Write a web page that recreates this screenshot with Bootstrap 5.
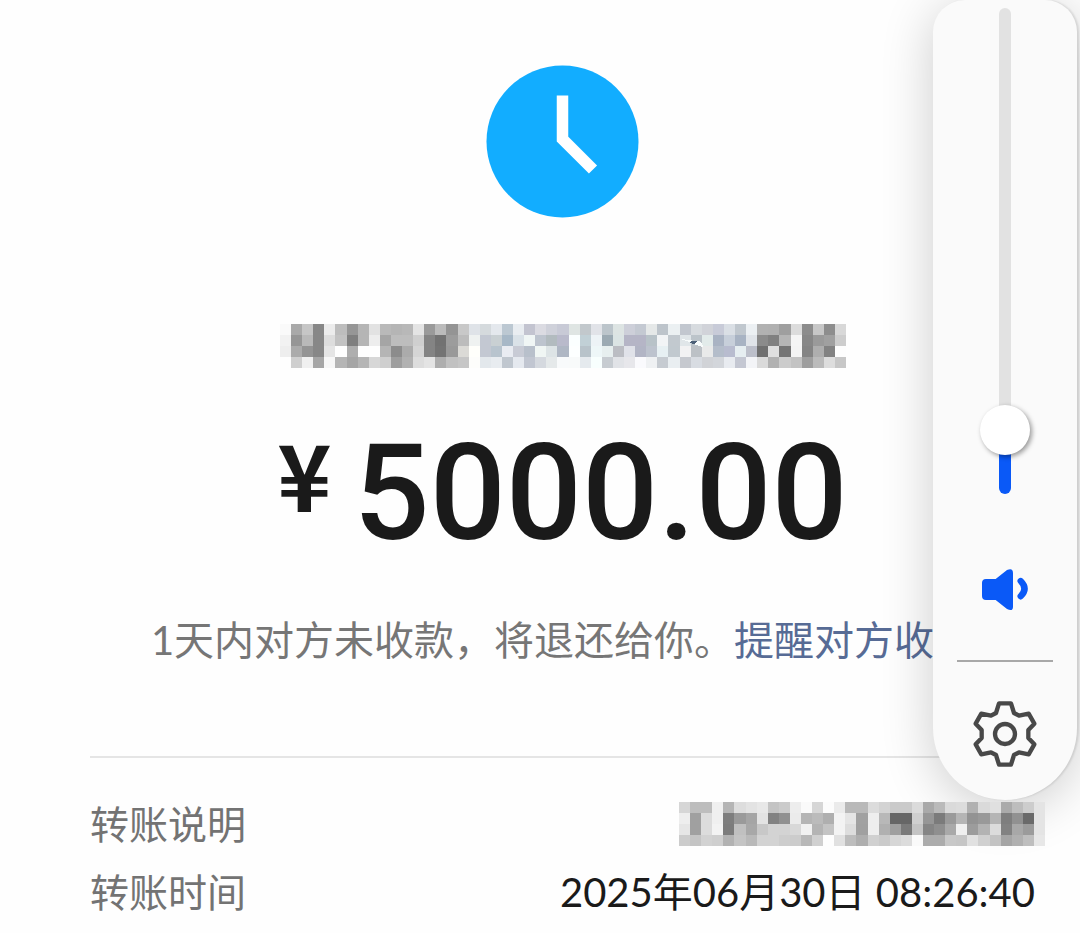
<!DOCTYPE html>
<html lang="zh-CN">
<head>
<meta charset="utf-8">
<meta name="viewport" content="width=device-width, initial-scale=1">
<title>转账</title>
<link href="https://cdn.jsdelivr.net/npm/bootstrap@5.3.0/dist/css/bootstrap.min.css" rel="stylesheet">
<style>
  body { font-family: Lato, "Noto Sans CJK SC", sans-serif; font-size: 40px; line-height: 60px; color: #1a1a1a; background: #fefefe; overflow: hidden; }
  .transfer { padding: 65px 45px 0 90px; }
  .mosaic { display: block; height: 44px; }
  .payee { margin-top: 106px; }
  .amount { margin-top: 58px; gap: 22px; color: #1a1a1a; }
  .yen { font-family: "Noto Sans CJK SC", sans-serif; font-size: 92px; line-height: 92px; font-weight: 700; }
  .figure { font-family: Roboto, sans-serif; font-size: 134px; line-height: 136px; font-weight: 500; }
  .hint { margin-top: 48px; padding-right: 40px; color: #767676; white-space: nowrap; }
  .hint a { color: #576b95; text-decoration: none; }
  .details { margin-top: 86px; border-top: 2px solid #e5e5e5; padding-top: 36px; }
  .details dt { color: #737373; font-weight: 400; font-size: 39px; }
  .details dd { margin: 0; }
  .details .line { min-height: 68px; }
  .details .note { margin-right: -10px; }
  .volume { top: 0; right: 3px; width: 144px; padding: 8px 0 32px; background: #fafafa; border-radius: 32px 32px 72px 72px; box-shadow: 0 8px 52px rgba(0,0,0,.2), 2px 0 2px rgba(0,0,0,.1); }
  .slider-slot { width: 52px; height: 486px; }
  .slider { appearance: none; -webkit-appearance: none; width: 486px; height: 52px; flex: none; margin: 0; background: transparent; transform: rotate(-90deg); }
  .slider::-webkit-slider-runnable-track { height: 12px; border-radius: 6px; background: linear-gradient(to right, #0a59f7 13%, #e2e2e2 13%); }
  .slider::-webkit-slider-thumb { -webkit-appearance: none; width: 50px; height: 50px; margin-top: -19px; border: 0; border-radius: 50%; background: #fff; box-shadow: -2px 2px 5px rgba(0,0,0,.4); }
  .speaker { margin-top: 74px; }
  .volume hr { width: 96px; margin: 48px 0 38px; border-top: 2px solid #a8a8a8; opacity: 1; }
</style>
</head>
<body>
<main class="transfer d-flex flex-column align-items-center">
  <svg width="153" height="153" viewBox="0 0 153 153" role="img" aria-label="待收款">
    <circle cx="76.500" cy="76.500" r="76" fill="#12adff"/>
    <path d="M76.500 30.500V74L107 104.500" fill="none" stroke="#fff" stroke-width="11.500"/>
  </svg>

  <svg class="mosaic payee" width="566" height="44" viewBox="0 0 51 4" preserveAspectRatio="none" shape-rendering="crispEdges" id="payee" aria-hidden="true"></svg>

  <h1 class="amount d-flex align-items-start mb-0">
    <span class="yen">¥</span><span class="figure">5000.00</span>
  </h1>

  <p class="hint mb-0">1天内对方未收款，将退还给你。<a href="#">提醒对方收</a></p>

  <dl class="details w-100 mb-0">
    <div class="line d-flex justify-content-between align-items-start">
      <dt>转账说明</dt>
      <dd class="note position-relative z-3 pt-2"><svg class="mosaic" width="366" height="44" viewBox="0 0 33 4" preserveAspectRatio="none" shape-rendering="crispEdges" id="note" aria-hidden="true"></svg></dd>
    </div>
    <div class="line d-flex justify-content-between align-items-start">
      <dt>转账时间</dt>
      <dd class="position-relative z-3">2025年06月30日 08:26:40</dd>
    </div>
  </dl>
</main>

<aside class="volume position-absolute d-flex flex-column align-items-center z-2">
  <div class="slider-slot d-flex align-items-center justify-content-center">
    <input class="slider" type="range" min="0" max="100" value="9" aria-label="音量">
  </div>
  <svg class="speaker" width="48" height="44" viewBox="184 564 144 132" aria-hidden="true">
    <path d="M199 597H228L262 570Q280 562 280 579V680Q280 696 262 687L228 660H199Q187 660 187 648V609Q187 597 199 597Z" fill="#0a59f7"/>
    <path d="M303 603Q326 626 303 649" fill="none" stroke="#0a59f7" stroke-width="19" stroke-linecap="round"/>
  </svg>
  <hr>
  <button type="button" class="btn p-0 border-0 d-flex" aria-label="设置">
    <svg width="66" height="68" viewBox="-99 -102 198 204" fill="none" stroke="#484848" stroke-width="13" stroke-linejoin="round" aria-hidden="true">
      <path d="M-18-92H18L27-63L42-55L71-61L88-31L70-12V12L88 31L71 61L42 55L27 63L18 92H-18L-27 63L-42 55L-71 61L-88 31L-70 12V-12L-88-31L-71-61L-42-55L-27-63Z"/>
      <circle r="30"/>
    </svg>
  </button>
</aside>

<script src="https://cdn.jsdelivr.net/npm/bootstrap@5.3.0/dist/js/bootstrap.bundle.min.js"></script>
<script>
  // Each entry is one tile: two digits for a grey, six for a colour.
  function tiles(id, rows) {
    document.getElementById(id).innerHTML = rows.map((row, y) => row.split(' ').map((c, x) =>
      `<rect x="${x}" y="${y}" width="1" height="1" fill="#${c.length === 2 ? c + c + c : c}"/>`).join('')).join('');
  }
  tiles('payee', [
    'fa a9 c6 87 ec bd 96 b5 e2 b9 b5 b8 e4 9a bb 94 c8 dfe3e8 d5dadd e4e8ed bcc8d2 e9edf1 c3c4d0 dbdbe2 cfd1da c8cad6 dfe5e3 c2c8cc e1e3e8 bcc5cb dde4e3 cdcfd9 c4c9d2 e5e8e8 bdc4cb ebf0f2 c2c7cf d7dbdf d1d3d9 c8cbd8 dadfe5 c0c7ce ecf0f3 b1 b0 9f dc 8c c7 8d d8',
    'f2 96 b9 87 dd c2 7f b5 ed a5 bd bd cf 84 72 9c bc eff2f1 c3c8d2 c9d0d3 a7b8c7 dae2e8 f0f6f5 bdc4ce b2bbbf b9bacb fbffff c1d0d6 edf3f6 9caab3 dbe4e4 b5b5c6 b5b5c6 b8c2c8 f2f4f6 c2c9cf e0e6e9 bcc4ca e2ebea a9b3c3 c7cfda a8b3c3 e0e4e9 8b 80 b5 f5 87 9a a0 cd',
    'ee ab 94 87 e5 fe ae fe fe b5 8c ab d5 84 74 99 dbdad6 fffffb c3c8d2 b8c4ce e9ecf2 c8cbd5 b8c0cb f0f6f4 dde4e6 afb7c4 fdffff b8c3ca eef7f8 e7efef bbbdc3 e0e2e9 b2b5c5 bdc3ce e7f0f3 c1c9cf f2f2f3 bcc1c6 e9eaea b4bdca b8bccf e6eef1 bcbfca 70 df 74 f4 84 ae 82 fd',
    'fe cf f0 a6 f7 b5 a5 b5 d7 cf 9e b1 dd e4 ae c1 c6 fdfdfb e3e8ec e8ecf0 c0c7cf e5e9ef c1c6d1 d5d9df e5e9ea f8fafb f8fafa e5eaee f8fffe c7ccd1 e1e3e7 e7e7eb fafafd eff1f3 c6cbd1 e9eef1 c6c9cf d8dce2 d1d3d7 d3d6db e8ebf0 c4c7d2 f3f4f7 da b1 cc c3 9e bb dd c7'
  ]);
  // A bright sliver with a dark centre lies across the payee tiles.
  document.getElementById('payee').insertAdjacentHTML('beforeend',
    '<path d="M36.100 1.350L37.100 1.500L37.900 1.600L38.200 2.150L37.500 1.900L36.800 1.600Z" fill="#f8fcfc"/><path d="M36.900 1.700L37.200 1.500L37.600 1.550L37.300 1.850Z" fill="#4c6078"/>');
  tiles('note', [
    'd6 bd bd f0 b5 dd e3 e8 c4 cb ed fa d6 fc eb b9 b9 dc d3 ca ca db a9 ba da dc b1 da e0 aa bd cd e4',
    'ee a0 dc f0 7e 9a a5 e3 82 90 eb b5 bb af f3 e5 a1 ee b8 66 66 cf 96 7b 9a b5 93 99 b5 7e 91 6a e4',
    'e6 a0 dc f3 7c c0 a8 c8 d3 d3 d8 f1 b4 c4 f3 dd a0 ee b0 9f 7a c4 85 8f a9 f0 9c b3 dc 82 a8 9b e4',
    'cc c4 d2 cf b2 c4 b9 d3 d3 cd cc b8 d0 fe e1 bd ae d0 ca d6 dc fa ac ac c8 c6 e1 d0 c3 a5 b0 be e7'
  ]);
</script>
</body>
</html>
